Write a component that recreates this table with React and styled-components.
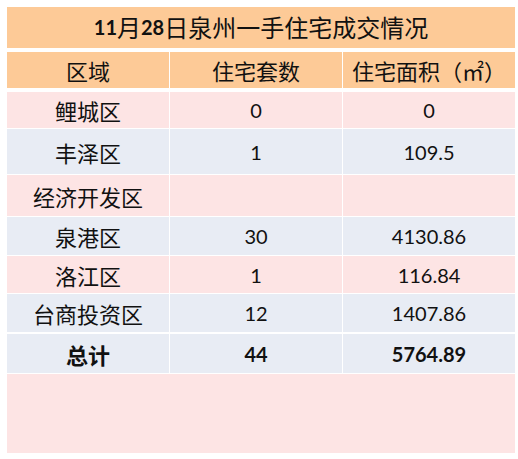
import { createGlobalStyle } from 'styled-components'
import styled from 'styled-components'

const GlobalStyle = createGlobalStyle`
  html, body {
    margin: 0;
    padding: 0;
    background: #ffffff;
  }
  body {
    font-family: "Noto Sans CJK SC", "Noto Sans", sans-serif;
    color: #111;
  }
`

const colors = {
  head: '#fdca97',
  pink: '#fde4e4',
  blue: '#e8ecf4',
}

const Page = styled.div`
  width: 518px;
  height: 459px;
  padding: 7px 0 0 7px;
  box-sizing: border-box;
`

const Table = styled.div`
  width: 508px;
  display: flex;
  flex-direction: column;
`

const TitleBar = styled.div`
  height: 41px;
  background: ${colors.head};
  display: flex;
  align-items: center;
  justify-content: center;
  font-size: 24px;
  line-height: 1;
  padding-bottom: 1px;
  box-sizing: border-box;
`

const Row = styled.div`
  display: grid;
  grid-template-columns: 162px 172px 172px;
  column-gap: 1px;
  height: ${({ $h }) => $h}px;
  margin-top: ${({ $gap }) => $gap ?? 1}px;
`

const Cell = styled.div`
  background: ${({ $bg }) => colors[$bg]};
  display: flex;
  align-items: center;
  justify-content: center;
  font-size: 22px;
  line-height: 1;
  font-weight: ${({ $bold }) => ($bold ? 700 : 400)};
  white-space: nowrap;
`

const Num = styled.span`
  font-family: "Lato", "Liberation Sans", sans-serif;
  font-size: 20px;
  font-weight: ${({ $bold }) => ($bold ? 700 : 400)};
`

const Filler = styled.div`
  height: 79px;
  margin-top: 1px;
  background: ${colors.pink};
`

const rows = [
  { name: '鲤城区', count: '0', area: '0', bg: 'pink', h: 36, gap: 4 },
  { name: '丰泽区', count: '1', area: '109.5', bg: 'blue', h: 45 },
  { name: '经济开发区', count: '', area: '', bg: 'pink', h: 41 },
  { name: '泉港区', count: '30', area: '4130.86', bg: 'blue', h: 38 },
  { name: '洛江区', count: '1', area: '116.84', bg: 'pink', h: 37 },
  { name: '台商投资区', count: '12', area: '1407.86', bg: 'blue', h: 38 },
  { name: '总计', count: '44', area: '5764.89', bg: 'blue', h: 39, gap: 2, bold: true },
]

export default function App() {
  return (
    <>
      <GlobalStyle />
      <Page>
        <Table>
          <TitleBar>
            <Num $bold>11</Num>月<Num $bold>28</Num>日泉州一手住宅成交情况
          </TitleBar>
          <Row $h={36} $gap={4}>
            <Cell $bg="head">区域</Cell>
            <Cell $bg="head">住宅套数</Cell>
            <Cell $bg="head">住宅面积（㎡）</Cell>
          </Row>
          {rows.map((r) => (
            <Row key={r.name} $h={r.h} $gap={r.gap}>
              <Cell $bg={r.bg} $bold={r.bold}>{r.name}</Cell>
              <Cell $bg={r.bg}>
                <Num $bold={r.bold}>{r.count}</Num>
              </Cell>
              <Cell $bg={r.bg}>
                <Num $bold={r.bold}>{r.area}</Num>
              </Cell>
            </Row>
          ))}
          <Filler />
        </Table>
      </Page>
    </>
  )
}
